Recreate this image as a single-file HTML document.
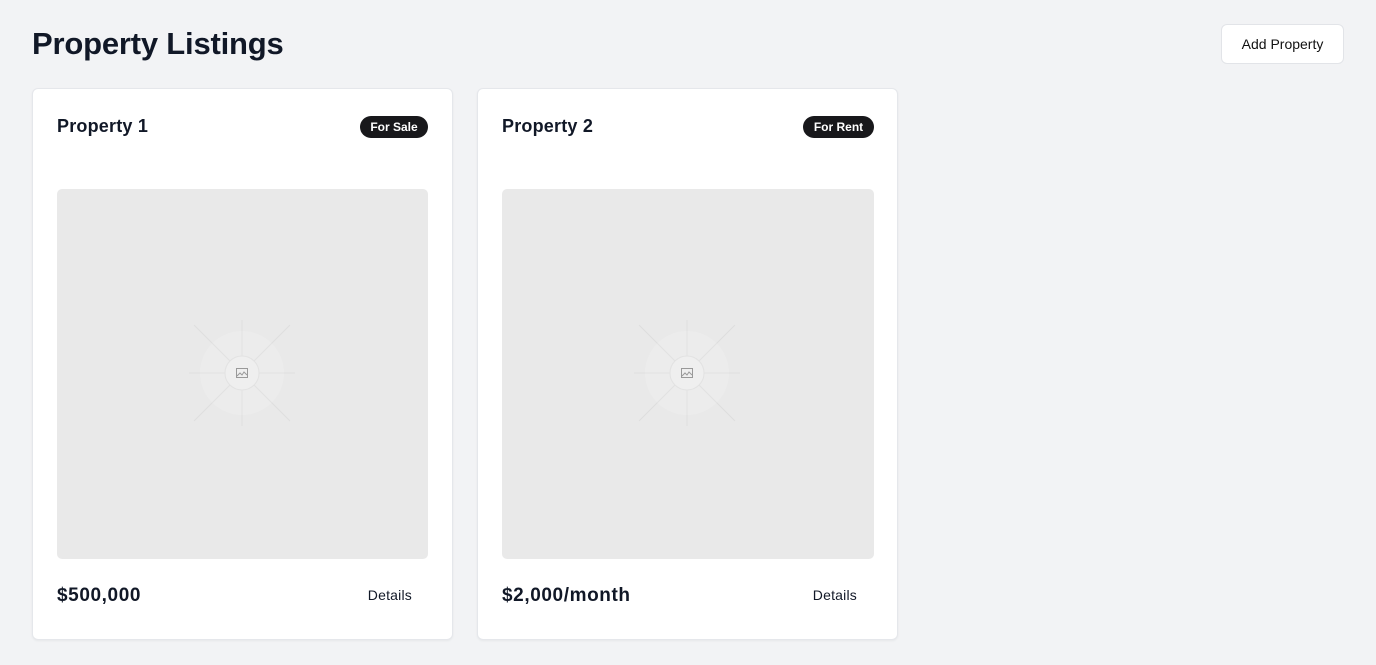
<!DOCTYPE html>
<html><head><style>
*{box-sizing:border-box;margin:0;padding:0}
body{width:1376px;height:665px;background:#f2f3f5;font-family:"Liberation Sans",Arial,sans-serif;color:#111827;position:relative;overflow:hidden}
h1{position:absolute;left:32px;top:26px;font-size:31px;font-weight:700;letter-spacing:-0.2px}
.btn{position:absolute;left:1221px;top:24px;width:123px;height:40px;background:#fff;border:1px solid #e2e4e8;border-radius:6px;font-size:14px;display:flex;align-items:center;justify-content:center;color:#111}
.card{position:absolute;top:88px;width:421px;height:552px;background:#fff;border:1px solid #e5e7eb;border-radius:6px;box-shadow:0 1px 2px rgba(0,0,0,.05)}
.title{position:absolute;left:24px;top:27px;font-size:18px;font-weight:700;letter-spacing:0.2px}
.badge{position:absolute;top:27px;height:22px;border-radius:11px;background:#18181b;color:#fff;font-size:12px;font-weight:700;display:flex;align-items:center;justify-content:center}
.img{position:absolute;left:24px;top:100px;width:371px;height:370px;background:#e9e9e9;border-radius:5px;overflow:hidden}
.img svg{position:absolute;left:132px;top:131px}
.price{position:absolute;left:24px;top:496px;font-size:19px;font-weight:700;letter-spacing:0.6px}
.det{position:absolute;right:40px;top:498px;font-size:14px;letter-spacing:0.2px}
</style></head><body>
<h1>Property Listings</h1>
<div class="btn">Add Property</div>
<div class="card" style="left:32px">
<div class="title">Property 1</div>
<div class="badge" style="left:327px;width:68px">For Sale</div>
<div class="img"><svg width="106" height="106" viewBox="0 0 106 106"><g stroke="#dedede" stroke-width="1"><line x1="53" y1="0" x2="53" y2="106"/><line x1="0" y1="53" x2="106" y2="53"/><line x1="5" y1="5" x2="101" y2="101"/><line x1="101" y1="5" x2="5" y2="101"/></g><circle cx="53" cy="53" r="42" fill="#ececec"/><g stroke="#e2e2e2"><line x1="53" y1="11" x2="53" y2="95"/><line x1="11" y1="53" x2="95" y2="53"/><line x1="23" y1="23" x2="83" y2="83"/><line x1="83" y1="23" x2="23" y2="83"/></g><circle cx="53" cy="53" r="17" fill="#efefef" stroke="#e2e2e2"/><rect x="47.5" y="48.5" width="11" height="9" fill="none" stroke="#999" stroke-width="1"/><path d="M48 56l3-3 2 2 2-3 3 3" fill="none" stroke="#999"/></svg></div>
<div class="price">$500,000</div>
<div class="det">Details</div>
</div>
<div class="card" style="left:477px">
<div class="title">Property 2</div>
<div class="badge" style="left:325px;width:71px">For Rent</div>
<div class="img" style="width:372px"><svg width="106" height="106" viewBox="0 0 106 106"><g stroke="#dedede" stroke-width="1"><line x1="53" y1="0" x2="53" y2="106"/><line x1="0" y1="53" x2="106" y2="53"/><line x1="5" y1="5" x2="101" y2="101"/><line x1="101" y1="5" x2="5" y2="101"/></g><circle cx="53" cy="53" r="42" fill="#ececec"/><g stroke="#e2e2e2"><line x1="53" y1="11" x2="53" y2="95"/><line x1="11" y1="53" x2="95" y2="53"/><line x1="23" y1="23" x2="83" y2="83"/><line x1="83" y1="23" x2="23" y2="83"/></g><circle cx="53" cy="53" r="17" fill="#efefef" stroke="#e2e2e2"/><rect x="47.5" y="48.5" width="11" height="9" fill="none" stroke="#999" stroke-width="1"/><path d="M48 56l3-3 2 2 2-3 3 3" fill="none" stroke="#999"/></svg></div>
<div class="price">$2,000/month</div>
<div class="det">Details</div>
</div>
</body></html>
